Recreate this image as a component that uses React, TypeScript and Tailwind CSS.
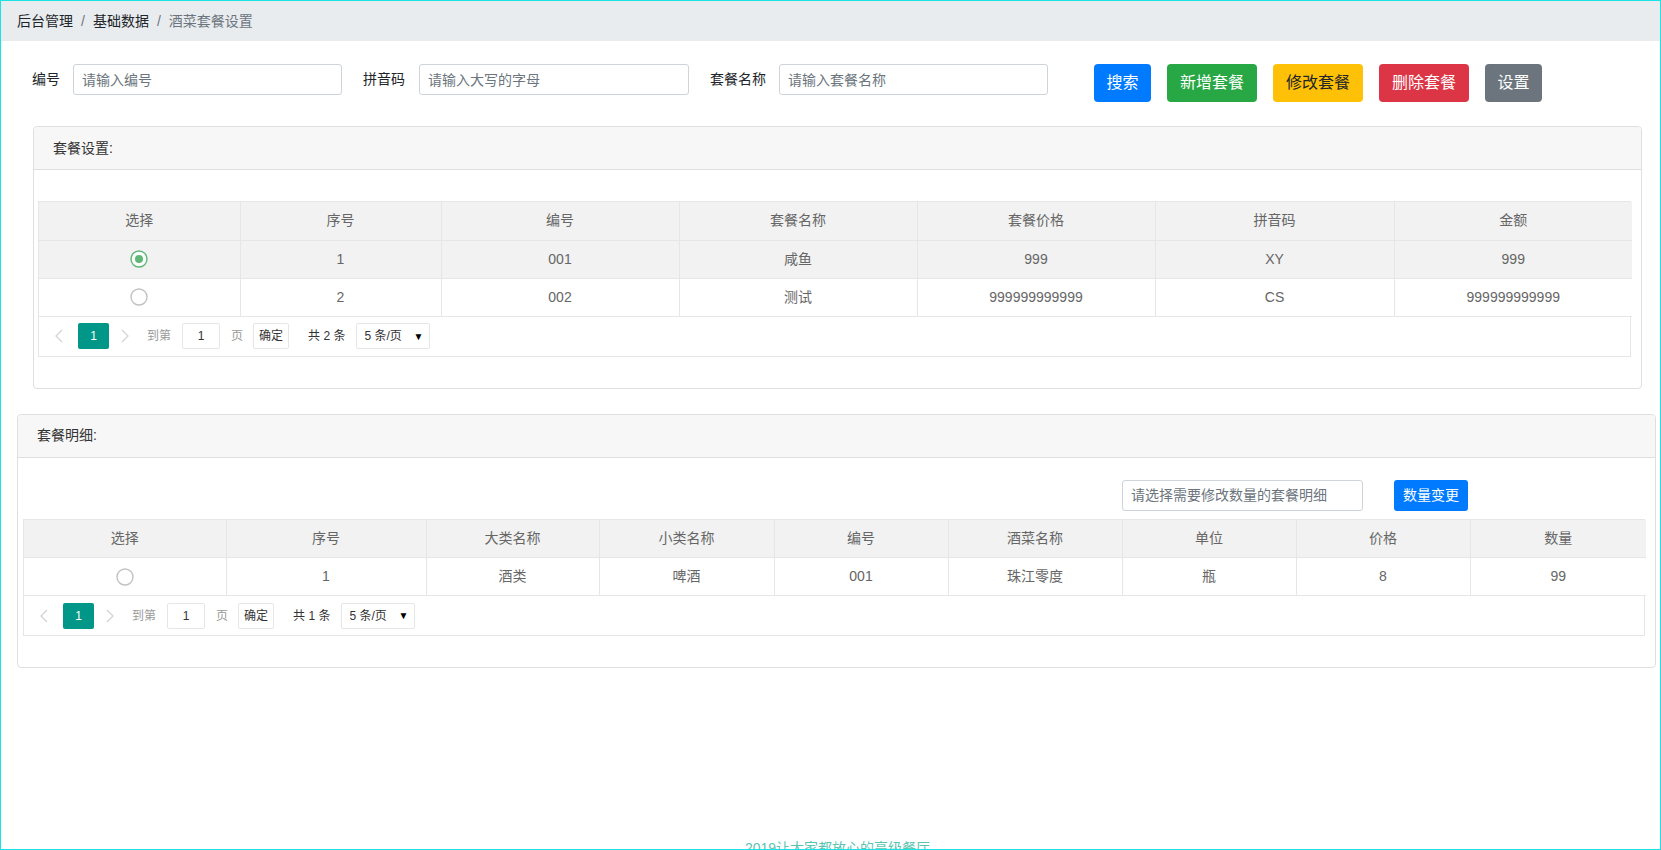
import React from 'react';

const font = "font-['Liberation_Sans','Noto_Sans_CJK_SC',sans-serif]";

interface Column {
    title: string;
    width: number;
}

const mealColumns: Column[] = [
    { title: '选择', width: 201 },
    { title: '序号', width: 201 },
    { title: '编号', width: 238 },
    { title: '套餐名称', width: 238 },
    { title: '套餐价格', width: 238 },
    { title: '拼音码', width: 239 },
    { title: '金额', width: 238 },
];

const mealRows = [
    { checked: true, cells: ['1', '001', '咸鱼', '999', 'XY', '999'] },
    { checked: false, cells: ['2', '002', '测试', '999999999999', 'CS', '999999999999'] },
];

const detailColumns: Column[] = [
    { title: '选择', width: 202 },
    { title: '序号', width: 200 },
    { title: '大类名称', width: 173 },
    { title: '小类名称', width: 175 },
    { title: '编号', width: 174 },
    { title: '酒菜名称', width: 174 },
    { title: '单位', width: 174 },
    { title: '价格', width: 174 },
    { title: '数量', width: 176 },
];

const detailRows = [
    { checked: false, cells: ['1', '酒类', '啤酒', '001', '珠江零度', '瓶', '8', '99'] },
];

function Radio({ checked }: { checked: boolean }) {
    return (
        <svg width="18" height="18" viewBox="0 0 18 18" className="mx-auto block">
            <circle cx="9" cy="9" r="8" fill="white" stroke={checked ? '#5FB878' : '#c2c2c2'} strokeWidth="1.4" />
            {checked && <circle cx="9" cy="9" r="4" fill="#5FB878" />}
        </svg>
    );
}

function Chevron({ dir }: { dir: 'left' | 'right' }) {
    return (
        <svg width="8" height="14" viewBox="0 0 8 14" className="block">
            <path
                d={dir === 'left' ? 'M7 1 L1 7 L7 13' : 'M1 1 L7 7 L1 13'}
                fill="none"
                stroke="#d2d2d2"
                strokeWidth="1.2"
            />
        </svg>
    );
}

function Pager({ total }: { total: number }) {
    return (
        <div className="flex h-[40px] items-center border-t border-[#e6e6e6] text-[12px] text-[#333]">
            <span className="ml-[9px] flex h-[26px] w-[22px] items-center justify-center">
                <Chevron dir="left" />
            </span>
            <span className="ml-[8px] flex h-[26px] w-[31px] items-center justify-center rounded-[2px] bg-[#009688] text-white">1</span>
            <span className="ml-[5px] flex h-[26px] w-[22px] items-center justify-center">
                <Chevron dir="right" />
            </span>
            <span className="ml-[11px] text-[#999]">到第</span>
            <span className="ml-[11px] flex h-[26px] w-[38px] items-center justify-center rounded-[2px] border border-[#e6e6e6]">1</span>
            <span className="ml-[11px] text-[#999]">页</span>
            <span className="ml-[10px] flex h-[26px] w-[36px] items-center justify-center rounded-[2px] border border-[#e6e6e6]">确定</span>
            <span className="ml-[19px]">共 {total} 条</span>
            <span className="ml-[11px] flex h-[26px] w-[74px] items-center justify-between rounded-[2px] border border-[#e6e6e6] pl-[7px] pr-[6px]">
                <span>5 条/页</span>
                <span className="text-[10px] text-black">▼</span>
            </span>
        </div>
    );
}

function DataTable({ columns, rows, total }: { columns: Column[]; rows: { checked: boolean; cells: string[] }[]; total: number }) {
    const width = columns.reduce((s, c) => s + c.width, 0);
    return (
        <div className="border border-[#e6e6e6]" style={{ width }}>
            <table className="w-full table-fixed border-collapse text-[14px] text-[#666]">
                <colgroup>
                    {columns.map((c, i) => (
                        <col key={i} style={{ width: c.width }} />
                    ))}
                </colgroup>
                <thead>
                    <tr className="bg-[#f2f2f2]">
                        {columns.map((c, i) => (
                            <th
                                key={i}
                                className={`h-[38px] border-b border-[#e6e6e6] p-0 text-center font-normal ${i > 0 ? 'border-l' : ''}`}
                            >
                                {c.title}
                            </th>
                        ))}
                    </tr>
                </thead>
                <tbody>
                    {rows.map((row, r) => (
                        <tr key={r} className={row.checked ? 'bg-[#f2f2f2]' : 'bg-white'}>
                            <td className="h-[38px] border-b border-[#e6e6e6] p-0">
                                <Radio checked={row.checked} />
                            </td>
                            {row.cells.map((cell, i) => (
                                <td key={i} className="h-[38px] border-b border-l border-[#e6e6e6] p-0 text-center">
                                    {cell}
                                </td>
                            ))}
                        </tr>
                    ))}
                </tbody>
            </table>
            <div className="-mt-px">
                <Pager total={total} />
            </div>
        </div>
    );
}

function Card({ title, children, className }: { title: string; children: React.ReactNode; className: string }) {
    return (
        <div className={`rounded-[4px] border border-[#dfdfdf] ${className}`}>
            <div className="flex h-[43px] items-center rounded-t-[4px] border-b border-[#dfdfdf] bg-[#f7f7f7] px-[19px] text-[14px] text-[#333]">
                {title}
            </div>
            {children}
        </div>
    );
}

export default function App() {
    const buttons = [
        { text: '搜索', cls: 'bg-[#007bff] text-white w-[57px]' },
        { text: '新增套餐', cls: 'bg-[#28a745] text-white w-[90px]' },
        { text: '修改套餐', cls: 'bg-[#ffc107] text-[#212529] w-[90px]' },
        { text: '删除套餐', cls: 'bg-[#dc3545] text-white w-[90px]' },
        { text: '设置', cls: 'bg-[#6c757d] text-white w-[57px]' },
    ];

    return (
        <div className={`relative h-[850px] overflow-hidden border border-[#19e3e3] bg-white ${font}`}>
            {/* breadcrumb */}
            <nav className="flex h-[40px] items-center bg-[#e9ecef] px-[16px] text-[14px]">
                <span className="text-[#212529]">后台管理</span>
                <span className="px-[8px] text-[#6c757d]">/</span>
                <span className="text-[#212529]">基础数据</span>
                <span className="px-[8px] text-[#6c757d]">/</span>
                <span className="text-[#6c757d]">酒菜套餐设置</span>
            </nav>

            {/* search bar */}
            <div className="flex items-start pl-[31px] pt-[23px] text-[14px] text-[#212529]">
                <span className="leading-[31px]">编号</span>
                <input
                    className="ml-[13px] h-[31px] w-[269px] rounded-[3px] border border-[#ced4da] px-[8px] text-[14px] placeholder:text-[#6c757d]"
                    placeholder="请输入编号"
                />
                <span className="ml-[21px] leading-[31px]">拼音码</span>
                <input
                    className="ml-[14px] h-[31px] w-[270px] rounded-[3px] border border-[#ced4da] px-[8px] text-[14px] placeholder:text-[#6c757d]"
                    placeholder="请输入大写的字母"
                />
                <span className="ml-[21px] leading-[31px]">套餐名称</span>
                <input
                    className="ml-[13px] h-[31px] w-[269px] rounded-[3px] border border-[#ced4da] px-[8px] text-[14px] placeholder:text-[#6c757d]"
                    placeholder="请输入套餐名称"
                />
                <div className="ml-[46px] flex gap-[16px]">
                    {buttons.map((b) => (
                        <button key={b.text} className={`h-[38px] rounded-[4px] text-[16px] ${b.cls}`}>
                            {b.text}
                        </button>
                    ))}
                </div>
            </div>

            {/* meal settings */}
            <Card title="套餐设置:" className="ml-[32px] mt-[24px] w-[1609px]">
                <div className="pb-[31px] pl-[4px] pt-[31px]">
                    <DataTable columns={mealColumns} rows={mealRows} total={2} />
                </div>
            </Card>

            {/* meal details */}
            <Card title="套餐明细:" className="ml-[16px] mt-[25px] w-[1639px]">
                <div className="pb-[31px] pl-[5px] pt-[22px]">
                    <div className="mb-[8px] flex justify-end pr-[187px]">
                        <input
                            className="h-[31px] w-[241px] rounded-[3px] border border-[#ced4da] px-[8px] text-[14px] placeholder:text-[#6c757d]"
                            placeholder="请选择需要修改数量的套餐明细"
                        />
                        <button className="ml-[31px] h-[31px] w-[74px] rounded-[3px] bg-[#007bff] text-[14px] text-white">
                            数量变更
                        </button>
                    </div>
                    <DataTable columns={detailColumns} rows={detailRows} total={1} />
                </div>
            </Card>

            <p className="mt-[170px] pl-[14px] text-center text-[14px] leading-[20px] text-[#5cc3b0]">
                2019让大家都放心的高级餐厅
            </p>
        </div>
    );
}
